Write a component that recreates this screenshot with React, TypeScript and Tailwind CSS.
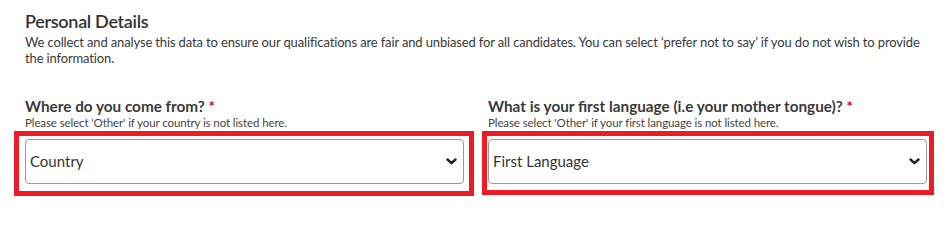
// Personal details form section with annotated (red-boxed) select fields

const font = "font-['Lato','Noto_Sans',sans-serif]"

interface FieldProps {
  label: string
  hint: string
  placeholder: string
  boxClass: string
}

function Chevron() {
  return (
    <svg width="11" height="7" viewBox="0 0 11 7" fill="none" className="shrink-0">
      <path d="M1.5 1.5 5.5 5.2 9.5 1.5" stroke="#222" strokeWidth="2.4" strokeLinecap="round" strokeLinejoin="round" />
    </svg>
  )
}

function SelectField({ label, hint, placeholder, boxClass }: FieldProps) {
  return (
    <div className="flex flex-col">
      <label className="text-[15.3px] font-bold leading-[20px] text-[#3a3a3a]">
        {label} <span className="text-[#e2001a]">*</span>
      </label>
      <p className="text-[11.5px] leading-[14px] tracking-[-0.1px] text-[#444]">{hint}</p>
      <div className="relative mt-[9px]">
        {/* select box */}
        <div className="flex h-[45px] items-center justify-between rounded-[4px] border border-[#9a9a9a] bg-white pl-[4px] pr-[6px]">
          <span className="text-[15px] text-[#333]">{placeholder}</span>
          <Chevron />
        </div>
        {/* red annotation outline */}
        <div className={`pointer-events-none absolute border-[5px] border-[#ed1c24] ${boxClass}`} />
      </div>
    </div>
  )
}

export default function App() {
  return (
    <div className={`${font} h-[209px] w-[952px] bg-white px-[25px] pt-[9px] text-[#333]`}>
      <h2 className="text-[18px] font-semibold leading-[24px] tracking-[-0.3px] text-[#333]">Personal Details</h2>
      <p className="mt-[1px] text-[13px] leading-[16px] tracking-[-0.14px] text-[#3a3a3a]">
        We collect and analyse this data to ensure our qualifications are fair and unbiased for all candidates. You
        can select ‘prefer not to say’ if you do not wish to provide the information.
      </p>

      <div className="mt-[30px] grid grid-cols-2 gap-x-[24px]">
        <SelectField
          label="Where do you come from?"
          hint="Please select 'Other' if your country is not listed here."
          placeholder="Country"
          boxClass="-left-[11px] -right-[10px] -top-[8px] -bottom-[12px]"
        />
        <SelectField
          label="What is your first language (i.e your mother tongue)?"
          hint="Please select 'Other' if your first language is not listed here."
          placeholder="First Language"
          boxClass="-left-[6px] -right-[7px] -top-[8px] -bottom-[11px]"
        />
      </div>
    </div>
  )
}
